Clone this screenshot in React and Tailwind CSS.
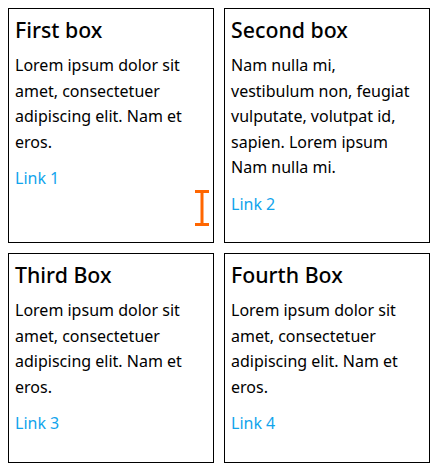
import React from 'react';

const boxes = [
  {
    title: 'First box',
    text: 'Lorem ipsum dolor sit amet, consectetuer adipiscing elit. Nam et eros.',
    link: 'Link 1',
    cursor: true,
  },
  {
    title: 'Second box',
    text: 'Nam nulla mi, vestibulum non, feugiat vulputate, volutpat id, sapien. Lorem ipsum Nam nulla mi.',
    link: 'Link 2',
  },
  {
    title: 'Third Box',
    text: 'Lorem ipsum dolor sit amet, consectetuer adipiscing elit. Nam et eros.',
    link: 'Link 3',
  },
  {
    title: 'Fourth Box',
    text: 'Lorem ipsum dolor sit amet, consectetuer adipiscing elit. Nam et eros.',
    link: 'Link 4',
  },
];

const TextCursor = () => (
  <svg
    className="absolute left-[186px] top-[181px]"
    width="14"
    height="36"
    viewBox="0 0 14 36"
  >
    <path d="M0 1.5H14M0 34.5H14M7 1.5V34.5" stroke="#ff6600" strokeWidth="3" fill="none" />
  </svg>
);

const Box = ({ title, text, link, cursor }) => (
  <div className="relative border border-black px-[6px] pt-[8px] pb-[25px]">
    <h2 className="mb-[11px] text-[21.3px] leading-[25.2px] font-medium text-black">{title}</h2>
    <p className="mb-[11px] text-[16px] leading-[25.5px] text-black">{text}</p>
    <p className="text-[16px] leading-[25.5px]">
      <a href="#" className="text-[#12a4ec]">
        {link}
      </a>
    </p>
    {cursor && <TextCursor />}
  </div>
);

export default function App() {
  return (
    <div className="grid grid-cols-2 gap-[10px] bg-white p-2 font-['Noto_Sans',sans-serif]">
      {boxes.map((b) => (
        <Box key={b.title} {...b} />
      ))}
    </div>
  );
}
